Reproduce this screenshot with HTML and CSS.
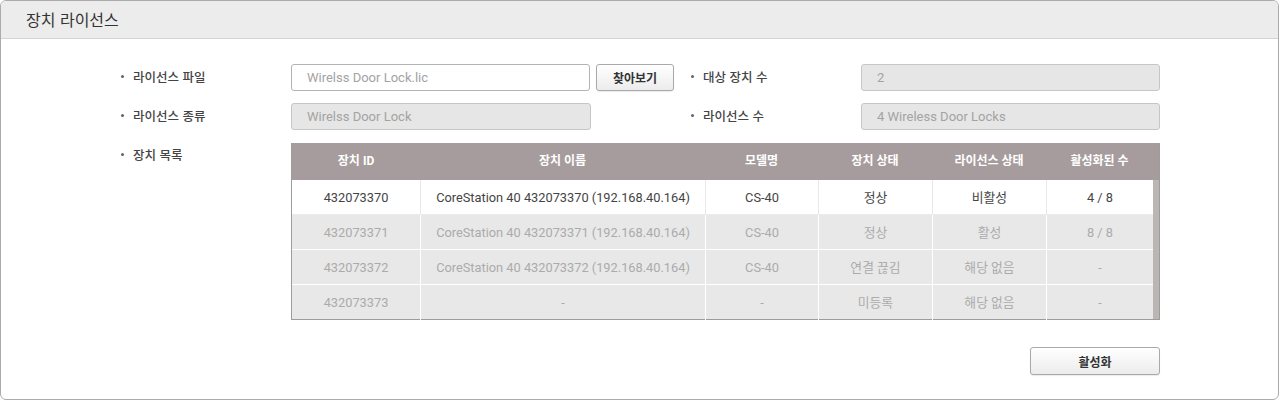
FILE: index.html
```html
<!DOCTYPE html>
<html lang="ko">
<head>
<meta charset="utf-8">
<title>장치 라이선스</title>
<link rel="stylesheet" href="styles.css">
</head>
<body>
<div class="panel">
  <div class="panel-head">장치 라이선스</div>
  <div class="panel-body">
    <div class="form">
      <div class="label">라이선스 파일</div>
      <div class="file-field">
        <div class="input file-input">Wirelss Door Lock.lic</div>
        <button class="btn browse">찾아보기</button>
      </div>
      <div class="label">대상 장치 수</div>
      <div class="input disabled">2</div>

      <div class="label">라이선스 종류</div>
      <div class="input disabled half">Wirelss Door Lock</div>
      <div class="label">라이선스 수</div>
      <div class="input disabled">4 Wireless Door Locks</div>

      <div class="label">장치 목록</div>
      <div class="grid-wrap">
        <div class="thead">
          <div class="th">장치 ID</div>
          <div class="th">장치 이름</div>
          <div class="th">모델명</div>
          <div class="th">장치 상태</div>
          <div class="th">라이선스 상태</div>
          <div class="th">활성화된 수</div>
        </div>
        <div class="tbody">
          <div class="rows">
            <div class="tr active">
              <div class="td">432073370</div>
              <div class="td">CoreStation 40 432073370 (192.168.40.164)</div>
              <div class="td">CS-40</div>
              <div class="td">정상</div>
              <div class="td">비활성</div>
              <div class="td">4 / 8</div>
            </div>
            <div class="tr">
              <div class="td">432073371</div>
              <div class="td">CoreStation 40 432073371 (192.168.40.164)</div>
              <div class="td">CS-40</div>
              <div class="td">정상</div>
              <div class="td">활성</div>
              <div class="td">8 / 8</div>
            </div>
            <div class="tr">
              <div class="td">432073372</div>
              <div class="td">CoreStation 40 432073372 (192.168.40.164)</div>
              <div class="td">CS-40</div>
              <div class="td">연결 끊김</div>
              <div class="td">해당 없음</div>
              <div class="td">-</div>
            </div>
            <div class="tr last">
              <div class="td">432073373</div>
              <div class="td">-</div>
              <div class="td">-</div>
              <div class="td">미등록</div>
              <div class="td">해당 없음</div>
              <div class="td">-</div>
            </div>
          </div>
          <div class="scrollbar"></div>
        </div>
      </div>
    </div>
    <div class="actions">
      <button class="btn activate">활성화</button>
    </div>
  </div>
</div>
</body>
</html>
```

FILE: styles.css
```css
* { box-sizing: border-box; }
html, body { margin: 0; padding: 0; background: #ffffff; }
body {
  font-family: Roboto, "Noto Sans CJK KR", "Noto Sans", sans-serif;
  color: #333333;
  font-size: 12px;
}
.panel {
  width: 1279px;
  height: 400px;
  border: 1px solid #ababab;
  border-radius: 6px;
  overflow: hidden;
  background: #ffffff;
}
.panel-head {
  height: 38px;
  background: #ececec;
  border-bottom: 1px solid #d3d3d3;
  padding-left: 25px;
  font-family: "Noto Sans CJK KR", sans-serif;
  font-size: 16px;
  line-height: 37px;
  color: #333333;
}
.panel-body {
  padding: 25px 0 0 117px;
}
.form {
  display: grid;
  grid-template-columns: 173px 397px 173px 299px;
  row-gap: 12px;
}
.label {
  position: relative;
  padding-left: 15px;
  height: 27px;
  line-height: 25px;
  font-family: "Noto Sans CJK KR", sans-serif;
  font-size: 12.5px;
  font-weight: 500;
  color: #444444;
}
.label::before {
  content: "";
  position: absolute;
  left: 3px;
  top: 11px;
  width: 3px;
  height: 3px;
  border-radius: 50%;
  background: #666666;
}
.file-field {
  display: flex;
  gap: 6px;
}
.input {
  height: 27px;
  border: 1px solid #b3b3b3;
  border-radius: 3px;
  padding-left: 15px;
  line-height: 25px;
  font-size: 13px;
  color: #a3a3a3;
  background: #ffffff;
}
.file-input { width: 299px; }
.half { width: 300px; }
.disabled {
  background: #e6e6e6;
  border-color: #c6c6c6;
}
.btn {
  font-family: "Noto Sans CJK KR", sans-serif;
  font-size: 12px;
  font-weight: 700;
  color: #333333;
  border: 1px solid #a9a9a9;
  border-radius: 3px;
  background: linear-gradient(#ffffff, #ececec);
  box-shadow: 0 1px 1px rgba(0,0,0,0.08);
  padding: 0;
  cursor: pointer;
}
.browse { width: 78px; height: 27px; }
.grid-wrap {
  grid-column: 2 / span 3;
  width: 869px;
  border: 1px solid #9c9c9c;
  border-top: 0;
  margin-top: 1px;
}
.thead, .tr {
  display: grid;
  grid-template-columns: 128px 285px 113px 114px 114px 107px;
}
.thead {
  height: 37px;
  background: #a69c9d;
}
.th {
  color: #ffffff;
  font-family: Roboto, "Noto Sans CJK KR", sans-serif;
  font-weight: 700;
  font-size: 12px;
  text-align: center;
  line-height: 37px;
}
.tbody {
  display: flex;
}
.rows { width: 861px; }
.scrollbar {
  width: 6px;
  background: #bcb5b5;
}
.tr {
  height: 35px;
  background: #e8e8e8;
  border-bottom: 1px solid #ffffff;
}
.tr.last { border-bottom: 0; height: 34px; }
.td {
  text-align: center;
  line-height: 35px;
  font-size: 12.8px;
  color: #ababab;
  border-left: 1px solid #ffffff;
  white-space: nowrap;
}
.td:first-child { border-left: 0; }
.tr.active { background: #ffffff; border-bottom-color: #ececec; }
.tr.active .td { color: #444444; border-left-color: #e8e8e8; }
.actions {
  display: flex;
  width: 1042px;
  justify-content: flex-end;
  padding-top: 27px;
}
.activate { width: 130px; height: 28px; }
```
